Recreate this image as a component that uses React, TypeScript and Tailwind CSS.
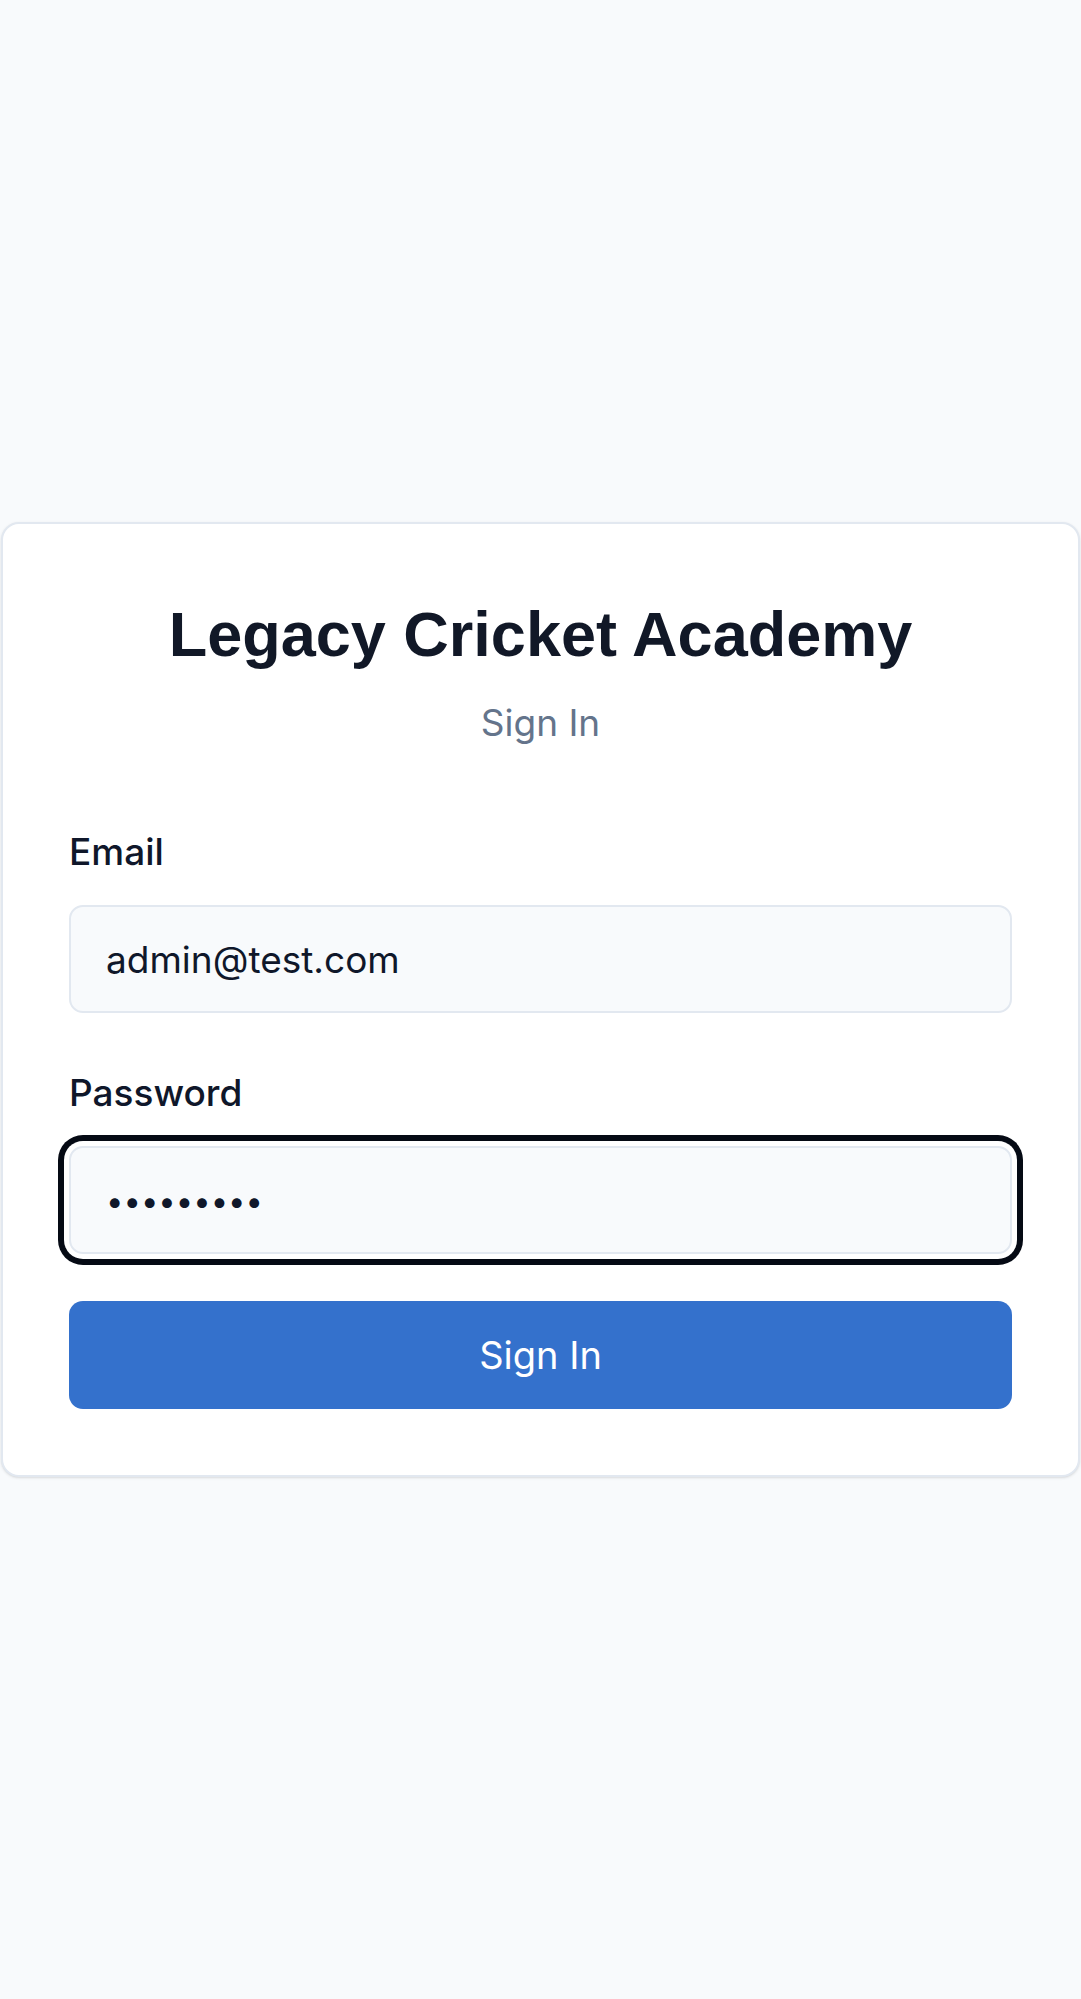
import React from "react";

export default function App() {
  return (
    <div className="min-h-screen bg-[#f8fafc] flex items-center justify-center px-px font-['Inter',sans-serif]">
      <div className="w-full bg-white border-2 border-[#e2e8f0] rounded-[18px] shadow-sm px-[66px] pt-[70px] pb-[66px] flex flex-col">
        <h1 className="text-center text-[63px] leading-[80px] font-bold text-[#111827] font-['Liberation_Sans',Arial,sans-serif]">
          Legacy Cricket Academy
        </h1>
        <p className="mt-[25px] text-center text-[37px] leading-[48px] text-[#64748b]">Sign In</p>
        <form className="mt-[81px] flex flex-col" onSubmit={(e) => e.preventDefault()}>
          <label htmlFor="email" className="text-[37px] leading-[48px] font-medium text-[#0f172a]">
            Email
          </label>
          <input
            id="email"
            type="email"
            readOnly
            defaultValue="admin@test.com"
            className="mt-[29px] block w-full h-[108px] rounded-[14px] border-2 border-[#e2e8f0] bg-[#f8fafc] px-[35px] text-[37px] text-[#0f172a] outline-none"
          />
          <label htmlFor="password" className="mt-[56px] text-[37px] leading-[48px] font-medium text-[#0f172a]">
            Password
          </label>
          <input
            id="password"
            type="password"
            readOnly
            defaultValue="password1"
            className="mt-[29px] block w-full h-[108px] rounded-[14px] border-2 border-[#e2e8f0] bg-[#f8fafc] px-[35px] text-[31px] text-[#0f172a] outline-none shadow-[0_0_0_5px_#ffffff,0_0_0_11px_#050a14]"
          />
          <button
            type="submit"
            className="mt-[47px] h-[108px] w-full rounded-[14px] bg-[#3471cc] text-white text-[38px]"
          >
            Sign In
          </button>
        </form>
      </div>
    </div>
  );
}
